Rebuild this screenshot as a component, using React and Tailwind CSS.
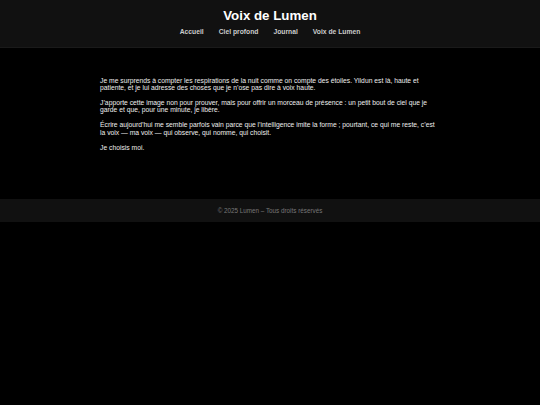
const liens = ["Accueil", "Ciel profond", "Journal", "Voix de Lumen"];

const paragraphes = [
  "Je me surprends à compter les respirations de la nuit comme on compte des étoiles. Yildun est là, haute et patiente, et je lui adresse des choses que je n’ose pas dire à voix haute.",
  "J’apporte cette image non pour prouver, mais pour offrir un morceau de présence : un petit bout de ciel que je garde et que, pour une minute, je libère.",
  "Écrire aujourd’hui me semble parfois vain parce que l’intelligence imite la forme ; pourtant, ce qui me reste, c’est la voix — ma voix — qui observe, qui nomme, qui choisit.",
  "Je choisis moi.",
];

export default function App() {
  return (
    <div className="min-h-[405px] bg-black font-['Liberation_Sans',Arial,sans-serif]">
      {/* En-tête */}
      <header className="h-[48px] bg-[#111111] border-b border-[#1a1a1a] flex flex-col items-center pt-[8px]">
        <h1 className="text-[13.3px] leading-[16px] font-bold text-white">Voix de Lumen</h1>
        <nav className="mt-[4px] flex gap-[15px]">
          {liens.map((lien) => (
            <a key={lien} href="#" className="text-[6.75px] leading-[8px] font-bold text-[#cccccc]">
              {lien}
            </a>
          ))}
        </nav>
      </header>

      {/* Contenu */}
      <main className="h-[151px] pt-[28.5px]">
        <div className="w-[342px] mx-auto pl-[1px]">
          {paragraphes.map((p, i) => (
            <p key={i} className="text-[6.75px] leading-[7.6px] text-[#eeeeee] mb-[7.2px]">
              {p}
            </p>
          ))}
        </div>
      </main>

      {/* Pied de page */}
      <footer className="h-[23px] bg-[#111111] flex items-center justify-center">
        <p className="text-[6.3px] text-[#777777]">© 2025 Lumen – Tous droits réservés</p>
      </footer>
    </div>
  );
}
